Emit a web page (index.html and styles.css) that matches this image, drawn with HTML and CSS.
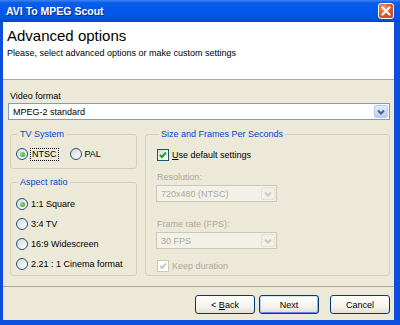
FILE: index.html
```html
<!DOCTYPE html>
<html>

<head>
  <meta charset="utf-8">
  <title>AVI To MPEG Scout</title>
  <link rel="stylesheet" href="styles.css">
</head>

<body>
  <div class="window">
    <!-- タイトルバー -->
    <div class="titlebar">
      <span class="title">AVI To MPEG Scout</span>
      <span class="close">
        <svg width="10" height="10" viewBox="0 0 10 10">
          <path d="M1.5 1.5 L8.5 8.5 M8.5 1.5 L1.5 8.5" stroke="#fff" stroke-width="2" stroke-linecap="square" />
        </svg>
      </span>
    </div>

    <div class="dialog">
      <div class="header">
        <h1>Advanced options</h1>
        <p>Please, select advanced options or make custom settings</p>
      </div>

      <div class="content">
        <div class="label">Video format</div>
        <div class="combo wide">
          <span class="value">MPEG-2 standard</span>
          <span class="drop">
            <svg width="8" height="6" viewBox="0 0 8 6">
              <path d="M1 1.5 L4 4.5 L7 1.5" fill="none" stroke="#4d6185" stroke-width="2" />
            </svg>
          </span>
        </div>

        <div class="groups">
          <div class="column">
            <fieldset class="tv">
              <legend>TV System</legend>
              <div class="inline">
                <div class="option"><span class="radio checked"></span><span class="focus">NTSC</span></div>
                <div class="option"><span class="radio"></span><span>PAL</span></div>
              </div>
            </fieldset>

            <fieldset class="aspect">
              <legend>Aspect ratio</legend>
              <div class="option"><span class="radio checked"></span><span>1:1 Square</span></div>
              <div class="option"><span class="radio"></span><span>3:4 TV</span></div>
              <div class="option"><span class="radio"></span><span>16:9 Widescreen</span></div>
              <div class="option"><span class="radio"></span><span>2.21 : 1 Cinema format</span></div>
            </fieldset>
          </div>

          <fieldset class="size">
            <legend>Size and Frames Per Seconds</legend>
            <div class="option">
              <span class="check">
                <svg width="8" height="8" viewBox="0 0 8 8">
                  <path d="M1 4 L3 6 L7 1.5" fill="none" stroke="#21a121" stroke-width="2" />
                </svg>
              </span>
              <span><u>U</u>se default settings</span>
            </div>
            <div class="label disabled res-label">Resolution:</div>
            <div class="combo small off">
              <span class="value">720x480 (NTSC)</span>
              <span class="drop">
                <svg width="8" height="6" viewBox="0 0 8 6">
                  <path d="M1 1.5 L4 4.5 L7 1.5" fill="none" stroke="#c9c7ba" stroke-width="2" />
                </svg>
              </span>
            </div>
            <div class="label disabled fps-label">Frame rate (FPS):</div>
            <div class="combo small off">
              <span class="value">30 FPS</span>
              <span class="drop">
                <svg width="8" height="6" viewBox="0 0 8 6">
                  <path d="M1 1.5 L4 4.5 L7 1.5" fill="none" stroke="#c9c7ba" stroke-width="2" />
                </svg>
              </span>
            </div>
            <div class="option keep">
              <span class="check off">
                <svg width="8" height="8" viewBox="0 0 8 8">
                  <path d="M1 4 L3 6 L7 1.5" fill="none" stroke="#cac8bb" stroke-width="2" />
                </svg>
              </span>
              <span class="disabled">Keep duration</span>
            </div>
          </fieldset>
        </div>
      </div>

      <div class="footer">
        <button class="btn">&lt; <u>B</u>ack</button>
        <button class="btn default">Next</button>
        <button class="btn cancel">Cancel</button>
      </div>
    </div>
  </div>
</body>

</html>
```

FILE: styles.css
```css
/* 全体 */
body {
  margin: 0;
  font-family: "Liberation Sans", Arial, sans-serif;
  font-size: 9px;
  color: #000;
}

.window {
  width: 400px;
  height: 325px;
  background: #0b4fdc;
  display: flex;
  flex-direction: column;
}

/* タイトルバー */
.titlebar {
  height: 22px;
  display: flex;
  align-items: center;
  justify-content: space-between;
  padding: 0 6px 0 6px;
  background: linear-gradient(to bottom, #3a85f7 0%, #0d5ee9 12%, #0059ec 45%, #0356e4 80%, #0145c9 100%);
}

.title {
  color: #fff;
  font-weight: bold;
  font-size: 10.5px;
  text-shadow: 1px 1px 0 #0a2a90;
}

.close {
  width: 14px;
  height: 14px;
  border: 1px solid #fff;
  border-radius: 3px;
  display: flex;
  align-items: center;
  justify-content: center;
  background: radial-gradient(circle at 35% 30%, #f3a284 0%, #e2582e 45%, #c5401a 100%);
}

/* ダイアログ */
.dialog {
  flex: 1;
  margin: 0 6px 5px 3px;
  background: #ece9d8;
  display: flex;
  flex-direction: column;
}

.header {
  height: 58px;
  box-sizing: border-box;
  background: #fff;
  border-bottom: 1px solid #aca899;
  padding: 5px 0 0 4px;
}

.header h1 {
  margin: 0;
  font-size: 15px;
  line-height: 17px;
  font-weight: normal;
}

.header p {
  margin: 4px 0 0 0;
  line-height: 11px;
}

.content {
  height: 206px;
  box-sizing: border-box;
  padding: 11px 4px 0 5px;
}

.label {
  line-height: 11px;
  margin: 0 0 1px 2px;
}

.disabled {
  color: #aca899;
}

/* コンボボックス */
.combo {
  height: 17px;
  box-sizing: border-box;
  border: 1px solid #7f9db9;
  background: #fff;
  display: flex;
  align-items: center;
  justify-content: space-between;
  padding: 0 1px 0 4px;
}

.combo .drop {
  width: 14px;
  height: 13px;
  box-sizing: border-box;
  border: 1px solid #b9cbf5;
  border-radius: 2px;
  background: linear-gradient(to bottom, #e2ecfe, #b8cdf8);
  display: flex;
  align-items: center;
  justify-content: center;
}

.combo.small {
  width: 121px;
  margin-left: -1px;
}

.combo.off {
  border-color: #c9c7ba;
  background: #f3f1e7;
  color: #aca899;
}

.combo.off .drop {
  border-color: #e3e1d6;
  background: #f3f1e7;
}

/* グループ */
.groups {
  display: flex;
  gap: 8px;
  margin: 9px 0 0 2px;
}

.column {
  width: 127px;
  display: flex;
  flex-direction: column;
  gap: 8px;
}

fieldset {
  margin: 0;
  border: 1px solid #d0d0bf;
  border-radius: 3px;
  min-width: 0;
}

legend {
  color: #0046d5;
  line-height: 11px;
  padding: 0 2px;
  margin-left: 2px;
}

.tv {
  height: 40px;
  box-sizing: border-box;
  padding: 8px 5px 0 5px;
}

.aspect {
  height: 99px;
  box-sizing: border-box;
  padding: 10px 5px 0 5px;
  display: flex;
  flex-direction: column;
  gap: 8px;
}

.size {
  flex: 1;
  height: 147px;
  box-sizing: border-box;
  padding: 9px 11px 0 11px;
}

.inline {
  display: flex;
  gap: 12px;
}

.option {
  display: flex;
  align-items: center;
  gap: 3px;
  height: 12px;
  line-height: 11px;
}

.radio {
  width: 12px;
  height: 12px;
  box-sizing: border-box;
  border: 1px solid #1c5180;
  border-radius: 50%;
  background: linear-gradient(135deg, #d8d8d0, #fff);
  display: flex;
  align-items: center;
  justify-content: center;
}

.radio.checked::after {
  content: "";
  width: 5px;
  height: 5px;
  border-radius: 50%;
  background: radial-gradient(circle at 35% 35%, #8be08b, #21a121);
}

.focus {
  outline: 1px dotted #000;
  padding: 0 1px;
}

.check {
  width: 12px;
  height: 12px;
  box-sizing: border-box;
  border: 1px solid #1c5180;
  background: linear-gradient(135deg, #dcdcd5, #fff);
  display: flex;
  align-items: center;
  justify-content: center;
}

.check.off {
  border-color: #cac8bb;
  background: #fff;
}

.res-label {
  margin: 11px 0 2px 0;
}

.fps-label {
  margin: 17px 0 2px 0;
}

.keep {
  margin-top: 11px;
}

/* ボタン */
.footer {
  flex: 1;
  border-top: 1px solid #aca899;
  display: flex;
  justify-content: flex-end;
  align-items: flex-start;
  padding: 8px 4px 0 0;
  gap: 4px;
}

.btn {
  width: 60px;
  height: 19px;
  font-family: "Liberation Sans", Arial, sans-serif;
  font-size: 9px;
  border: 1px solid #003c74;
  border-radius: 3px;
  background: linear-gradient(to bottom, #fff 0%, #f4f3ee 60%, #e3e0d5 100%);
  padding: 0;
}

.btn.default {
  box-shadow: inset 0 1px 0 #cee7ff, inset 1px 0 0 #b8d2fb, inset -1px 0 0 #89adf3, inset 0 -1px 0 #6982ee;
}

.btn.cancel {
  margin-left: 7px;
}
```
